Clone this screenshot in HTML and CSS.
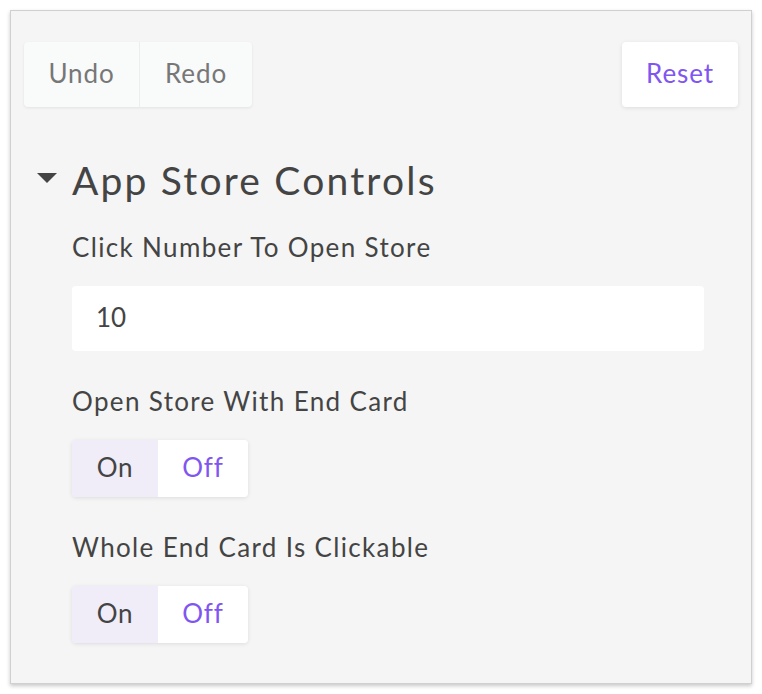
FILE: index.html
```
<!DOCTYPE html>
<html>
<head>
<meta charset="utf-8">
<link rel="stylesheet" href="styles.css">
</head>
<body>
<div class="panel">
  <div class="toolbar">
    <div class="btn-group">
      <button class="btn btn-undo">Undo</button>
      <button class="btn btn-redo">Redo</button>
    </div>
    <button class="btn btn-reset">Reset</button>
  </div>
  <div class="section-head">
    <span class="caret"></span>
    <h2 class="section-title">App Store Controls</h2>
  </div>
  <div class="section-body">
    <div class="field">
      <div class="label">Click Number To Open Store</div>
      <div class="input">10</div>
    </div>
    <div class="field">
      <div class="label">Open Store With End Card</div>
      <div class="toggle">
        <span class="opt opt-on">On</span>
        <span class="opt opt-off">Off</span>
      </div>
    </div>
    <div class="field">
      <div class="label">Whole End Card Is Clickable</div>
      <div class="toggle">
        <span class="opt opt-on">On</span>
        <span class="opt opt-off">Off</span>
      </div>
    </div>
  </div>
</div>
</body>
</html>
```

FILE: styles.css
```
* { box-sizing: border-box; }
html, body { margin: 0; background: #ffffff; }
body {
  font-family: "Lato", "Open Sans", sans-serif;
  color: #444;
  padding: 10px;
}
.panel {
  width: 742px;
  height: 674px;
  background: #f4f5f4;
  border: 1px solid #d0d0d0;
  box-shadow: 0 2px 4px rgba(0,0,0,0.22);
  padding: 31px 13px 0 13px;
}
.toolbar {
  display: flex;
  justify-content: space-between;
  align-items: flex-start;
}
.btn-group {
  display: flex;
  border-radius: 4px;
  background: #f9fafa;
  box-shadow: 0 1px 3px rgba(0,0,0,0.08);
}
.btn {
  font-family: inherit;
  font-size: 26px;
  letter-spacing: 0.9px;
  border: none;
  height: 65px;
  margin: 0;
  padding: 0 0 4px 0;
  cursor: pointer;
}
.btn-undo {
  width: 116px;
  background: transparent;
  color: #777;
  border-right: 1px solid #eceeed;
  border-radius: 4px 0 0 4px;
}
.btn-redo {
  width: 112px;
  background: transparent;
  color: #777;
  border-radius: 0 4px 4px 0;
}
.btn-reset {
  width: 116px;
  background: #fff;
  color: #7f56f0;
  border-radius: 4px;
  box-shadow: 0 1px 4px rgba(0,0,0,0.10);
}
.section-head {
  display: flex;
  align-items: flex-start;
  margin-top: 51px;
  height: 44px;
}
.caret {
  width: 0;
  height: 0;
  border-left: 10px solid transparent;
  border-right: 10px solid transparent;
  border-top: 10px solid #444;
  margin-top: 15px;
  margin-left: 13px;
  margin-right: 15px;
}
.section-title {
  margin: 0;
  font-weight: normal;
  font-size: 39px;
  letter-spacing: 2.2px;
  line-height: 44px;
  color: #444;
}
.section-body {
  padding-left: 48px;
}
.field {
  display: flex;
  flex-direction: column;
  align-items: flex-start;
}
.label {
  font-size: 26px;
  letter-spacing: 1.35px;
  line-height: 30px;
  margin-top: 30px;
  color: #444;
}
.input {
  margin-top: 24px;
  width: 632px;
  height: 65px;
  background: #fff;
  border-radius: 4px;
  font-size: 26px;
  line-height: 63px;
  padding-left: 24px;
  color: #444;
}
.field + .field .label { margin-top: 35px; }
.toggle {
  margin-top: 24px;
  display: flex;
  height: 57px;
  border-radius: 4px;
  overflow: hidden;
  box-shadow: 0 1px 4px rgba(0,0,0,0.10);
}
.opt {
  display: flex;
  align-items: center;
  justify-content: center;
  font-size: 26px;
  letter-spacing: 0.8px;
  padding-bottom: 3px;
}
.opt-on {
  width: 86px;
  background: #f0edf9;
  color: #444;
}
.opt-off {
  width: 90px;
  background: #fff;
  color: #7f56f0;
}
```
